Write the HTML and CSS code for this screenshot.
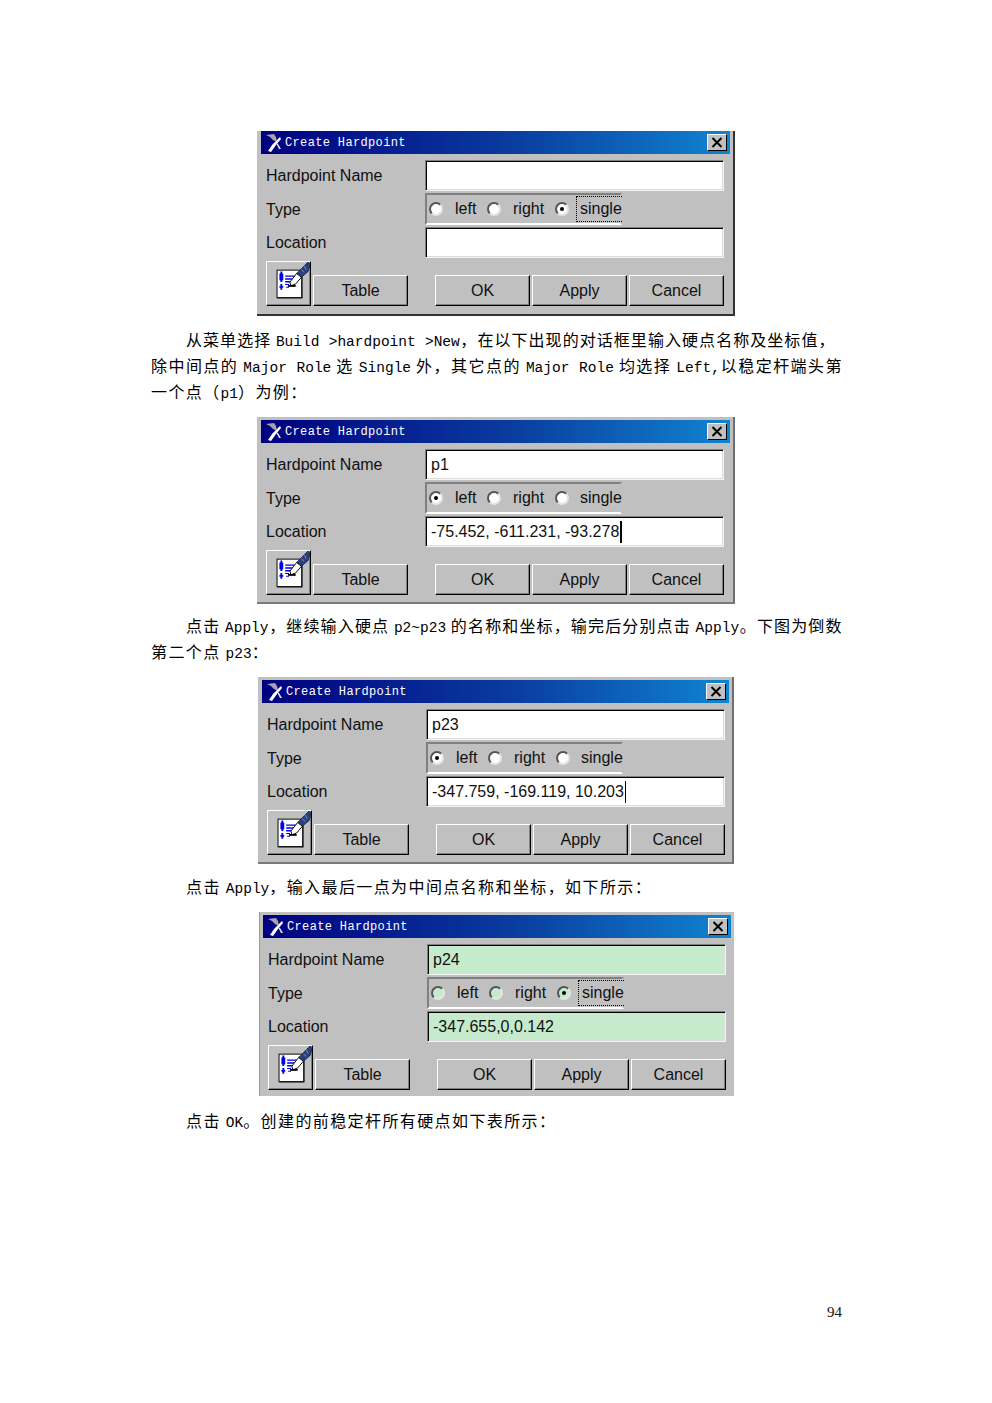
FILE: index.html
```html
<!DOCTYPE html>
<html lang="zh">
<head>
<meta charset="utf-8">
<title>Create Hardpoint</title>
<link rel="stylesheet" href="styles.css">
</head>
<body>
<svg class="defs" width="0" height="0" aria-hidden="true">
  <defs>
    <symbol id="logo" viewBox="0 0 16 18">
      <path d="M0 1 L8 0 L10 3 L11 8 L7 6 L4 3 Z" fill="#a9a2ad"/>
      <path d="M14 3 L15 5 L10 11 L5 18 L2 17 L6 11 L10 7 Z" fill="#fff"/>
      <path d="M10 9 L12 10 L15 15 L13 15 Z" fill="#e8e8e8"/>
    </symbol>
    <symbol id="closex" viewBox="0 0 20 16">
      <path d="M5 3 L15 13 M15 3 L5 13" stroke="#000" stroke-width="2.2" fill="none"/>
    </symbol>
    <symbol id="tableicon" viewBox="0 0 45 45">
      <rect x="10.5" y="8.5" width="26" height="29" fill="#fff" stroke="#000"/>
      <path d="M36 37h1V10h-1z M11 38h26v-1H11z" fill="#000"/>
      <path d="M14 10h2v2h1v7h-1v2h-2v-2h-1v-7h1z M13 25h1v-2h2v2h1v2h-1v2h-2v-2h-1z M19 14h10v1.500H19z M19 17h8v1.500h-8z M19 20h5v1.500h-5z M19 23h4v1h-4z M20 26h3v1h-3z" fill="#0000e8"/>
      <path d="M43 0 L45 3 L43 10 L36 16 L31 12 L38 5 Z" fill="#29427f" stroke="#10193a" stroke-width=".8"/>
      <path d="M39 4 L41 8 M36 8 L39 11" stroke="#7c90c4" stroke-width="1"/>
      <path d="M31 12 L36 16 L30 23 L25 25 L24 21 Z" fill="#fff" stroke="#000" stroke-width="1"/>
      <path d="M22 24h8v2h-8z" fill="#000"/>
    </symbol>
  </defs>
</svg>
<main class="page">

  <section class="dialog dialog-one">
    <header class="titlebar">
      <svg class="logo"><use href="#logo"/></svg>
      <span class="title-text">Create Hardpoint</span>
      <span class="close"><svg class="close-x"><use href="#closex"/></svg></span>
    </header>
    <div class="form">
      <div class="label">Hardpoint Name</div>
      <div class="field"></div>
      <div class="label">Type</div>
      <div class="radios">
        <span class="option"><i class="radio"></i><span>left</span></span>
        <span class="option"><i class="radio"></i><span>right</span></span>
        <span class="option"><i class="radio on"></i><span class="focus-label focused">single</span></span>
      </div>
      <div class="label">Location</div>
      <div class="field"></div>
    </div>
    <div class="actions">
      <button class="btn icon-btn"><svg class="table-icon"><use href="#tableicon"/></svg></button>
      <button class="btn btn-table">Table</button>
      <div class="btn-group">
        <button class="btn">OK</button>
        <button class="btn">Apply</button>
        <button class="btn">Cancel</button>
      </div>
    </div>
  </section>

  <div class="para">
    <p class="line first full end-gap"><span>从菜单选择 </span><span class="lat">Build &gt;hardpoint &gt;New</span><span>，在以下出现的对话框里输入硬点名称及坐标值，</span></p>
    <p class="line full">除中间点的 <span class="lat">Major Role</span> 选 <span class="lat">Single</span> 外，其它点的 <span class="lat">Major Role</span> 均选择 <span class="lat">Left,</span>以稳定杆端头第</p>
    <p class="line">一个点（<span class="lat">p1</span>）为例：</p>
  </div>

  <section class="dialog dialog-two">
    <header class="titlebar">
      <svg class="logo"><use href="#logo"/></svg>
      <span class="title-text">Create Hardpoint</span>
      <span class="close"><svg class="close-x"><use href="#closex"/></svg></span>
    </header>
    <div class="form">
      <div class="label">Hardpoint Name</div>
      <div class="field"><span>p1</span></div>
      <div class="label">Type</div>
      <div class="radios">
        <span class="option"><i class="radio on"></i><span>left</span></span>
        <span class="option"><i class="radio"></i><span>right</span></span>
        <span class="option"><i class="radio"></i><span class="focus-label">single</span></span>
      </div>
      <div class="label">Location</div>
      <div class="field"><span class="caret">-75.452, -611.231, -93.278</span></div>
    </div>
    <div class="actions">
      <button class="btn icon-btn"><svg class="table-icon"><use href="#tableicon"/></svg></button>
      <button class="btn btn-table">Table</button>
      <div class="btn-group">
        <button class="btn">OK</button>
        <button class="btn">Apply</button>
        <button class="btn">Cancel</button>
      </div>
    </div>
  </section>

  <div class="para">
    <p class="line first full">点击 <span class="lat">Apply</span>，继续输入硬点 <span class="lat">p2~p23</span> 的名称和坐标，输完后分别点击 <span class="lat">Apply</span>。下图为倒数</p>
    <p class="line">第二个点 <span class="lat">p23</span>：</p>
  </div>

  <section class="dialog dialog-three">
    <header class="titlebar">
      <svg class="logo"><use href="#logo"/></svg>
      <span class="title-text">Create Hardpoint</span>
      <span class="close"><svg class="close-x"><use href="#closex"/></svg></span>
    </header>
    <div class="form">
      <div class="label">Hardpoint Name</div>
      <div class="field"><span>p23</span></div>
      <div class="label">Type</div>
      <div class="radios">
        <span class="option"><i class="radio on"></i><span>left</span></span>
        <span class="option"><i class="radio"></i><span>right</span></span>
        <span class="option"><i class="radio"></i><span class="focus-label">single</span></span>
      </div>
      <div class="label">Location</div>
      <div class="field"><span class="caret thin">-347.759, -169.119, 10.203</span></div>
    </div>
    <div class="actions">
      <button class="btn icon-btn"><svg class="table-icon"><use href="#tableicon"/></svg></button>
      <button class="btn btn-table">Table</button>
      <div class="btn-group">
        <button class="btn">OK</button>
        <button class="btn">Apply</button>
        <button class="btn">Cancel</button>
      </div>
    </div>
  </section>

  <div class="para">
    <p class="line first">点击 <span class="lat">Apply</span>，输入最后一点为中间点名称和坐标，如下所示：</p>
  </div>

  <section class="dialog dialog-four">
    <header class="titlebar">
      <svg class="logo"><use href="#logo"/></svg>
      <span class="title-text">Create Hardpoint</span>
      <span class="close"><svg class="close-x"><use href="#closex"/></svg></span>
    </header>
    <div class="form">
      <div class="label">Hardpoint Name</div>
      <div class="field green"><span>p24</span></div>
      <div class="label">Type</div>
      <div class="radios">
        <span class="option"><i class="radio green"></i><span>left</span></span>
        <span class="option"><i class="radio green"></i><span>right</span></span>
        <span class="option"><i class="radio green on"></i><span class="focus-label focused">single</span></span>
      </div>
      <div class="label">Location</div>
      <div class="field green"><span>-347.655,0,0.142</span></div>
    </div>
    <div class="actions">
      <button class="btn icon-btn"><svg class="table-icon"><use href="#tableicon"/></svg></button>
      <button class="btn btn-table">Table</button>
      <div class="btn-group">
        <button class="btn">OK</button>
        <button class="btn">Apply</button>
        <button class="btn">Cancel</button>
      </div>
    </div>
  </section>

  <div class="para">
    <p class="line first">点击 <span class="lat">OK</span>。创建的前稳定杆所有硬点如下表所示：</p>
  </div>

  <footer class="page-number">94</footer>
</main>
</body>
</html>
```

FILE: styles.css
```css
html, body {
  margin: 0;
  padding: 0;
  background: #fff;
}

.defs {
  display: block;
  height: 0;
}

.page {
  box-sizing: border-box;
  width: 992px;
  height: 1403px;
  padding: 131px 150px 0 151px;
  display: flex;
  flex-direction: column;
  font-family: "Noto Sans CJK SC", "Liberation Serif", serif;
  color: #000;
}

/* body copy */
.line {
  margin: 0;
  height: 26px;
  line-height: 26px;
  font-size: 16px;
  letter-spacing: 1.4px;
  white-space: pre;
}

.line.first {
  padding-left: 35px;
}

.line.full {
  white-space: pre-wrap;
  text-align: justify;
  text-align-last: justify;
  letter-spacing: .5px;
}

.line.end-gap {
  padding-right: 7px;
}

.lat {
  font-family: "Liberation Mono", monospace;
  font-size: 14.5px;
  letter-spacing: 0;
}

.page-number {
  margin-top: auto;
  margin-bottom: 83px;
  align-self: flex-end;
  font-family: "Liberation Serif", serif;
  font-size: 15px;
  line-height: 16px;
  color: #111;
}

/* dialog shell */
.dialog {
  box-sizing: border-box;
  width: 478px;
  background: #c0c0c0;
  padding: 0 3px 7px 4px;
  border-right: 2px solid #6f6f6f;
  border-bottom: 2px solid #7a7a7a;
  font-family: "Liberation Sans", sans-serif;
  font-size: 16px;
  color: #111;
}

.dialog-one {
  margin-left: 106px;
  margin-bottom: 10px;
  padding-bottom: 8px;
  border-right-color: #333;
  border-bottom-color: #333;
}

.dialog-two {
  margin-top: 13px;
  margin-bottom: 8px;
  margin-left: 106px;
  padding-top: 3px;
}

.dialog-three {
  margin-top: 13px;
  margin-bottom: 9px;
  margin-left: 107px;
  width: 476px;
  padding-top: 3px;
}

.dialog-four {
  margin-top: 13px;
  margin-bottom: 11px;
  margin-left: 108px;
  width: 475px;
  padding: 3px 3px 6px 3px;
  border: 0;
  border-left: 1px solid #9a9a9a;
}

.titlebar {
  height: 23px;
  display: flex;
  align-items: center;
  padding: 0 3px 0 5px;
  background: linear-gradient(to right, #000080 0%, #0a3ea0 55%, #1084d0 100%);
  color: #fff;
}

.logo {
  width: 16px;
  height: 18px;
  flex: none;
}

.title-text {
  margin-left: 3px;
  font-family: "Liberation Mono", monospace;
  font-size: 12px;
  letter-spacing: .35px;
  white-space: pre;
  flex: 1;
}

.close {
  box-sizing: border-box;
  width: 20px;
  height: 17px;
  display: flex;
  background: #c0c0c0;
  border: 1px solid;
  border-color: #fff #000 #000 #fff;
}

.close-x {
  width: 18px;
  height: 15px;
}

/* form */
.form {
  margin-top: 6px;
  padding-left: 5px;
  display: grid;
  grid-template-columns: 159px 299px;
  grid-template-rows: 31px 32px 31px;
  row-gap: 2px;
  align-items: center;
}

.label {
  line-height: 20px;
  padding-top: 1px;
}

.field {
  box-sizing: border-box;
  height: 100%;
  display: flex;
  align-items: center;
  padding-left: 5px;
  background: #fff;
  border: 1px solid;
  border-color: #808080 #f4f4f4 #f4f4f4 #808080;
  box-shadow: inset 1px 1px 0 #000, inset -1px -1px 0 #dcdcdc;
}

.field.green {
  background: #c6ebcc;
}

.caret {
  padding-right: 1px;
  border-right: 2px solid #000;
  line-height: 22px;
}

.caret.thin {
  border-right-width: 1px;
}

.radios {
  box-sizing: border-box;
  width: 197px;
  height: 100%;
  display: grid;
  grid-template-columns: 58px 68px auto;
  align-items: center;
  padding-left: 2px;
  padding-bottom: 1px;
  border: 2px solid;
  border-color: #808080 #fff #fff #808080;
  border-right-color: transparent;
}

.option {
  display: flex;
  align-items: center;
  column-gap: 12px;
}

.radio {
  box-sizing: border-box;
  flex: none;
  width: 14px;
  height: 14px;
  border-radius: 50%;
  display: flex;
  align-items: center;
  justify-content: center;
  background: #fff;
  border: 2px solid;
  border-color: #555 #e4e4e4 #e4e4e4 #555;
}

.radio.green {
  background: #c6ebcc;
}

.radio.on::after {
  content: "";
  width: 4px;
  height: 4px;
  border-radius: 50%;
  background: #000;
}

.focus-label {
  margin-left: -5px;
  padding: 2px 0 2px 3px;
  line-height: 20px;
  border: 1px dotted transparent;
  border-right: 0;
}

.focus-label.focused {
  border-color: #000;
}

/* buttons */
.actions {
  margin-top: 3px;
  padding-left: 5px;
  display: flex;
  align-items: flex-end;
  column-gap: 2px;
}

.btn {
  box-sizing: border-box;
  width: 95px;
  height: 31px;
  margin: 0;
  padding: 0;
  display: flex;
  align-items: center;
  justify-content: center;
  background: #c0c0c0;
  border: 1px solid;
  border-color: #fff #000 #000 #fff;
  box-shadow: inset -1px -1px 0 #808080;
  font-family: "Liberation Sans", sans-serif;
  font-size: 16px;
  color: #111;
}

.icon-btn {
  width: 45px;
  height: 45px;
}

.table-icon {
  width: 43px;
  height: 43px;
}

.btn-group {
  margin-left: 25px;
  display: flex;
  column-gap: 2px;
}
```
